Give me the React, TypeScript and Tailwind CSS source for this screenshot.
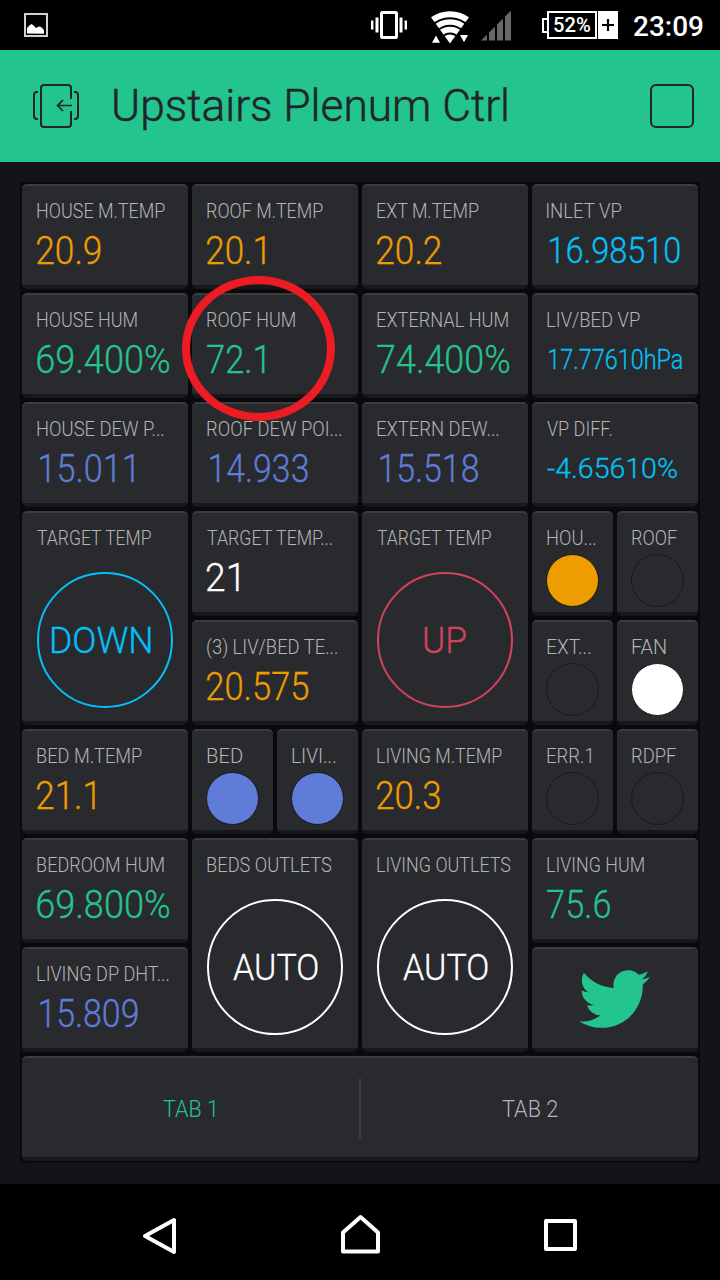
import { useLayoutEffect, useRef, useState, type ReactNode } from 'react';
import clsx from 'clsx';

const tones: Record<string, string> = {
  orange: 'text-[#ed9d00]',
  green: 'text-[#24c48e]',
  sky: 'text-[#04c0f8]',
  indigo: 'text-[#5f7cd8]',
  red: 'text-[#d3435c]',
  white: 'text-white',
};

const sizes: Record<string, string> = {
  lg: 'text-[39px] mt-[11px]',
  md: 'text-[37px] mt-[11px]',
  sm: 'text-[27px] mt-[11px]',
};

// Squeezes a line of text so that its ink fills exactly `width` pixels
function FitText({ text, width, className }: { text: string; width: number; className?: string }) {
  const ref = useRef<HTMLSpanElement>(null);
  const [fit, setFit] = useState({ scale: 1, shift: 0 });

  useLayoutEffect(() => {
    const ctx = document.createElement('canvas').getContext('2d');
    if (!ref.current || !ctx) return;
    const style = getComputedStyle(ref.current);
    ctx.font = `${style.fontWeight} ${style.fontSize} ${style.fontFamily}`;
    const m = ctx.measureText(text);
    const scale = width / (m.actualBoundingBoxLeft + m.actualBoundingBoxRight);
    setFit({ scale, shift: m.actualBoundingBoxLeft * scale });
  }, [text, width]);

  return (
    <div className={clsx('shrink-0 whitespace-nowrap', className)} style={{ width }}>
      <span
        ref={ref}
        className="inline-block origin-left"
        style={{ transform: `translateX(${fit.shift}px) scaleX(${fit.scale})` }}
      >
        {text}
      </span>
    </div>
  );
}

function Tile({ className, children }: { className?: string; children: ReactNode }) {
  return (
    <div
      className={clsx(
        'overflow-hidden rounded-[5px] border-t-2 border-b-4 border-t-[#3b3c40] border-b-[#17181a] bg-[#292a2e]',
        className,
      )}
    >
      {children}
    </div>
  );
}

function Label({ text, width }: { text: string; width: number }) {
  return <FitText text={text} width={width} className="ml-px h-5 text-[20px] leading-[22px] text-[#b4b5b7]" />;
}

type ValueProps = {
  label: string;
  lw: number;
  value: string;
  vw: number;
  tone: string;
  size?: string;
  pad?: string;
};

function ValueTile({ label, lw, value, vw, tone, size = 'lg', pad = 'pl-px' }: ValueProps) {
  return (
    <Tile className="col-span-2 pt-[14px] pl-[14px]">
      <Label text={label} width={lw} />
      <div className={pad}>
        <FitText
          text={value}
          width={vw}
          className={clsx('h-10 leading-10 [-webkit-text-stroke:0.3px]', tones[tone], sizes[size])}
        />
      </div>
    </Tile>
  );
}

type ButtonProps = { label: string; lw: number; text: string; tw: number; tone: string; nudge?: string };

function ButtonTile({ label, lw, text, tw, tone, nudge }: ButtonProps) {
  return (
    <Tile className="col-span-2 row-span-2 pt-[14px] pl-[14px]">
      <Label text={label} width={lw} />
      <div
        className={clsx(
          'mt-[25px] ml-px flex size-[136px] items-center justify-center rounded-full border-2 border-current pt-0.5 text-[36px] leading-10 [-webkit-text-stroke:0.3px]',
          tones[tone],
        )}
      >
        <FitText text={text} width={tw} className={nudge} />
      </div>
    </Tile>
  );
}

function LedTile({ label, lw, color }: { label: string; lw: number; color?: string }) {
  return (
    <Tile className="pt-[14px] pl-[14px]">
      <Label text={label} width={lw} />
      <div className={clsx('mt-[7px] size-[53px] rounded-full border border-[#17181b]', color)} />
    </Tile>
  );
}

function StatusBar() {
  return (
    <div className="flex h-[50px] items-center bg-black text-white">
      <svg className="ml-6 size-6" viewBox="0 0 24 24" fill="none">
        <rect x="1" y="1" width="22" height="22" stroke="#d0d0ce" strokeWidth="2" />
        <path d="M3 20.5V15l3-3 1.5-1 1.5 1 3 3 3-1.5 1.5.3 2.5 2 1 2v3z" fill="#fff" />
      </svg>
      <svg className="ml-[323px] h-7 w-9" viewBox="0 0 36 28" fill="none" stroke="#fff">
        <rect x="10.5" y="1.5" width="15" height="25" rx="1" strokeWidth="3" />
        <path d="M1.2 9.5v9M34.800 9.500v9" strokeWidth="2.4" />
        <path d="M6 6.5v15M30 6.500v15" strokeWidth="3" />
      </svg>
      <svg className="mt-0.5 ml-[23px] h-[34px] w-10" viewBox="0 0 40 34" fill="#fff">
        <path d="M1 8.300A33 33 0 0 1 39 8.300L20 34.500z" />
        <g fill="none" stroke="#000" strokeWidth="1.900">
          <circle cx="20" cy="35" r="25.800" />
          <circle cx="20" cy="35" r="18.200" />
          <circle cx="20" cy="35" r="10.500" />
        </g>
        <path d="M2 33.700l4-7.300 4 7.300zM30 26h8l-4 7.300z" />
      </svg>
      <svg className="ml-[11px] h-[31px] w-[31px]" viewBox="0 0 31 31" fill="#676767">
        <path d="M0 30.500L6 24.500v6zM8 22.500l6-6v14H8zM16 14.500l6-6v22h-6zM24 6.500l6-6v30h-6z" />
      </svg>
      <div className="ml-[30px] flex h-7 items-center">
        <div className="h-[15px] w-[7px] border-y-2 border-l-2 border-white" />
        <div className="-ml-0.5 flex h-7 w-[50px] items-center justify-center border-2 border-white text-[20px] font-medium">
          <FitText text="52%" width={36} />
        </div>
        <svg className="ml-px h-7 w-5" viewBox="0 0 20 28">
          <path d="M0 0h20v28H0z" fill="#fff" />
          <path d="M4 14h12M10 8v12" stroke="#000" strokeWidth="2.2" />
        </svg>
      </div>
      <FitText text="23:09" width={69} className="ml-4 pt-[3px] text-[28px] font-medium" />
    </div>
  );
}

function Header() {
  return (
    <div className="flex h-28 items-center bg-[#24c48e] text-[#20252a]">
      <svg className="ml-[33px] h-[44px] w-[46px]" viewBox="0 0 46 44" fill="none" stroke="currentColor" strokeWidth="2">
        <path d="M38 15V4q0-3-3-3H11Q8 1 8 4v36q0 3 3 3h24q3 0 3-3V27" />
        <path d="M5 8H4Q1 8 1 11v21q0 3 3 3h1M41 8h1q3 0 3 3v21q0 3-3 3h-1" />
        <path d="M39 21.500H25M30 16l-5.500 5.500L30 27" strokeWidth="1.700" />
      </svg>
      <FitText
        text="Upstairs Plenum Ctrl"
        width={393}
        className="ml-[35px] text-[45px] leading-[56px] [-webkit-text-stroke:0.5px]"
      />
      <div className="ml-[143px] size-11 rounded-md border-2 border-current" />
    </div>
  );
}

function NavBar() {
  return (
    <div className="flex h-24 items-center bg-black">
      <svg className="mt-2 ml-[142px] h-[38px] w-[35px]" viewBox="0 0 35 38" fill="none" stroke="#fff" strokeWidth="4" strokeLinejoin="round">
        <path d="M32 3v32L3 19z" />
      </svg>
      <svg className="mt-1 ml-[163px] h-10 w-[41px]" viewBox="0 0 41 40" fill="none" stroke="#fff" strokeWidth="4" strokeLinejoin="round">
        <path d="M3 37.500V18.500L20.500 3 38 18.500v19z" />
      </svg>
      <div className="mt-[6px] ml-[163px] h-8 w-[33px] rounded-[2px] border-4 border-white" />
    </div>
  );
}

export default function App() {
  return (
    <div className="relative h-[1280px] w-[720px] overflow-hidden bg-[#141318] font-['Roboto','Noto_Sans',sans-serif] font-light">
      <StatusBar />
      <Header />
      <div className="h-[1022px] px-5 pt-5">
        <div className="grid h-[981px] grid-cols-8 grid-rows-9 gap-1 bg-[#0a0a0c] p-0.5">
          <ValueTile label="HOUSE M.TEMP" lw={128} value="20.9" vw={64} tone="orange" />
          <ValueTile label="ROOF M.TEMP" lw={116} value="20.1" vw={58} tone="orange" />
          <ValueTile label="EXT M.TEMP" lw={102} value="20.2" vw={64} tone="orange" />
          <ValueTile label="INLET VP" lw={75} value="16.98510" vw={130} tone="sky" size="md" pad="pl-1" />

          <ValueTile label="HOUSE HUM" lw={100} value="69.400%" vw={132} tone="green" />
          <ValueTile label="ROOF HUM" lw={88} value="72.1" vw={58} tone="green" />
          <ValueTile label="EXTERNAL HUM" lw={131} value="74.400%" vw={132} tone="green" />
          <ValueTile label="LIV/BED VP" lw={93} value="17.77610hPa" vw={133} tone="sky" size="sm" pad="pl-[3px]" />

          <ValueTile label="HOUSE DEW P..." lw={127} value="15.011" vw={94} tone="indigo" pad="pl-1" />
          <ValueTile label="ROOF DEW POI..." lw={135} value="14.933" vw={98} tone="indigo" pad="pl-1" />
          <ValueTile label="EXTERN DEW..." lw={122} value="15.518" vw={98} tone="indigo" pad="pl-1" />
          <ValueTile label="VP DIFF." lw={65} value="-4.65610%" vw={130} tone="sky" size="sm" />

          <ButtonTile label="TARGET TEMP" lw={115} text="DOWN" tw={99} tone="sky" nudge="mr-2" />
          <ValueTile label="TARGET TEMP..." lw={126} value="21" vw={32} tone="white" />
          <ButtonTile label="TARGET TEMP" lw={115} text="UP" tw={42} tone="red" />
          <LedTile label="HOU..." lw={49} color="bg-[#ed9d00]" />
          <LedTile label="ROOF" lw={45} />

          <ValueTile label="(3) LIV/BED TE..." lw={131} value="20.575" vw={101} tone="orange" />
          <LedTile label="EXT..." lw={44} />
          <LedTile label="FAN" lw={34} color="bg-white" />

          <ValueTile label="BED M.TEMP" lw={105} value="21.1" vw={58} tone="orange" />
          <LedTile label="BED" lw={35} color="bg-[#5f7cd8]" />
          <LedTile label="LIVI..." lw={44} color="bg-[#5f7cd8]" />
          <ValueTile label="LIVING M.TEMP" lw={125} value="20.3" vw={63} tone="orange" />
          <LedTile label="ERR.1" lw={44} />
          <LedTile label="RDPF" lw={44} />

          <ValueTile label="BEDROOM HUM" lw={127} value="69.800%" vw={132} tone="green" />
          <ButtonTile label="BEDS OUTLETS" lw={125} text="AUTO" tw={85} tone="white" />
          <ButtonTile label="LIVING OUTLETS" lw={134} text="AUTO" tw={85} tone="white" />
          <ValueTile label="LIVING HUM" lw={97} value="75.6" vw={63} tone="green" />

          <ValueTile label="LIVING DP DHT..." lw={132} value="15.809" vw={98} tone="indigo" pad="pl-1" />
          <Tile className="col-span-2 flex items-center justify-center pt-px pr-0.5">
            <svg className="h-[58px] w-[71px] text-[#24c48e]" viewBox="0 2.2 24 19.6" fill="currentColor">
              <path d="M23.953 4.57a10 10 0 01-2.825.775 4.958 4.958 0 002.163-2.723c-.951.555-2.005.959-3.127 1.184a4.92 4.92 0 00-8.384 4.482C7.69 8.095 4.067 6.13 1.64 3.162a4.822 4.822 0 00-.666 2.475c0 1.71.87 3.213 2.188 4.096a4.904 4.904 0 01-2.228-.616v.06a4.923 4.923 0 003.946 4.827 4.996 4.996 0 01-2.212.085 4.936 4.936 0 004.604 3.417 9.867 9.867 0 01-6.102 2.105c-.39 0-.779-.023-1.17-.067a13.995 13.995 0 007.557 2.209c9.053 0 13.998-7.496 13.998-13.985 0-.21 0-.42-.015-.63A9.935 9.935 0 0024 4.59z" />
            </svg>
          </Tile>

          <Tile className="col-span-8 flex items-center pt-0.5 text-[24px]">
            <div className="flex h-[61px] flex-1 items-center justify-center border-r-2 border-[#3b3c40] text-[#24c48e]">
              <FitText text="TAB 1" width={52} className="mr-1" />
            </div>
            <div className="flex flex-1 items-center justify-center text-[#b4b5b7]">
              <FitText text="TAB 2" width={56} />
            </div>
          </Tile>
        </div>
      </div>
      <NavBar />

      {/* red marker around the roof humidity reading */}
      <div className="absolute top-[276px] left-[182px] h-[145px] w-[153px] rounded-[50%] border-8 border-[#ed1c24]" />
    </div>
  );
}
